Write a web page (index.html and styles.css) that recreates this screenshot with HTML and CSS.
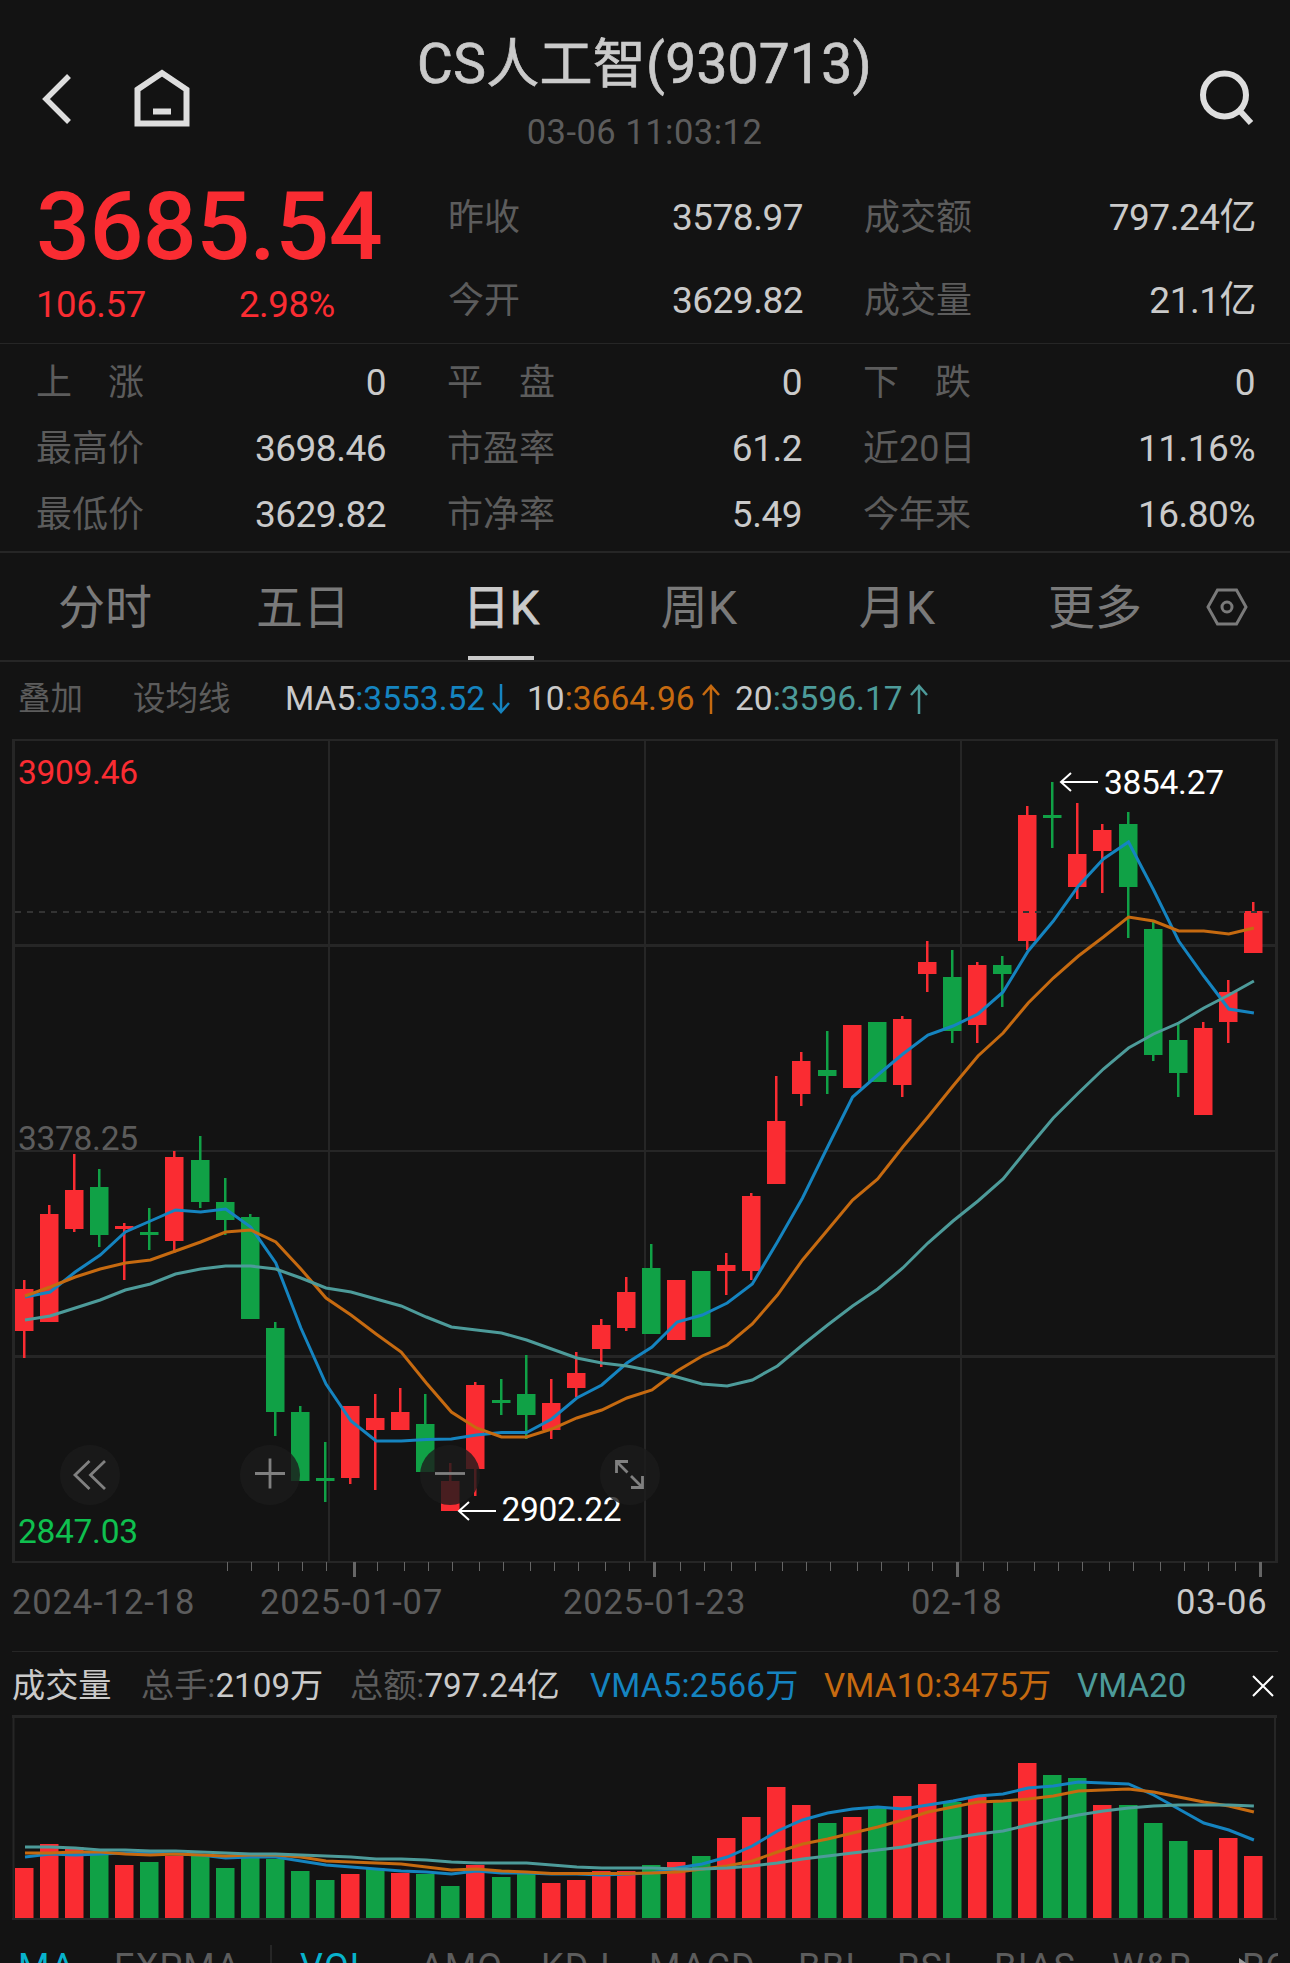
FILE: index.html
```html
<!DOCTYPE html>
<html lang="zh-CN">
<head>
    <meta charset="UTF-8">
    <meta name="viewport" content="width=device-width, initial-scale=1.0">
    <title>CS人工智(930713)</title>
    <link rel="stylesheet" href="styles.css">
</head>
<body>

<header class="top-bar">
    <div class="top-left">
        <svg class="icon-back" viewBox="0 0 30 50"><path d="M27 2 L4 25 L27 48"/></svg>
        <svg class="icon-home" viewBox="0 0 56 60"><path d="M3.5 20.5 L28 4 L52.5 20.5 V54.5 H3.5 Z"/><path d="M19 42.500 H37"/></svg>
    </div>
    <div class="top-title">
        <h1>CS<span class="cjk">人工智</span>(930713)</h1>
        <p>03-06 11:03:12</p>
    </div>
    <svg class="icon-search" viewBox="0 0 56 56"><circle cx="25.500" cy="25" r="21.500"/><path d="M41 41 L52 53"/></svg>
</header>

<section class="quote">
    <div class="price-box">
        <div class="price">3685.54</div>
        <div class="change"><span>106.57</span><span>2.98%</span></div>
    </div>
    <dl class="pairs">
        <div class="pair"><dt>昨收</dt><dd>3578.97</dd></div>
        <div class="pair"><dt>成交额</dt><dd>797.24亿</dd></div>
        <div class="pair"><dt>今开</dt><dd>3629.82</dd></div>
        <div class="pair"><dt>成交量</dt><dd>21.1亿</dd></div>
    </dl>
</section>

<dl class="stats">
    <div class="pair"><dt>上　涨</dt><dd>0</dd></div>
    <div class="pair"><dt>平　盘</dt><dd>0</dd></div>
    <div class="pair"><dt>下　跌</dt><dd>0</dd></div>
    <div class="pair"><dt>最高价</dt><dd>3698.46</dd></div>
    <div class="pair"><dt>市盈率</dt><dd>61.2</dd></div>
    <div class="pair"><dt>近20日</dt><dd>11.16%</dd></div>
    <div class="pair"><dt>最低价</dt><dd>3629.82</dd></div>
    <div class="pair"><dt>市净率</dt><dd>5.49</dd></div>
    <div class="pair"><dt>今年来</dt><dd>16.80%</dd></div>
</dl>

<nav class="tabs">
    <a>分时</a>
    <a>五日</a>
    <a class="active">日K</a>
    <a>周K</a>
    <a>月K</a>
    <a>更多</a>
    <svg class="icon-set" viewBox="0 0 44 40"><path d="M12.500 3 H31.500 L41 20 L31.500 37 H12.500 L3 20 Z"/><circle cx="22" cy="20" r="5"/></svg>
</nav>

<div class="ma-row">
    <span class="ma-add">叠加</span>
    <span class="ma-set">设均线</span>
    <span class="ma-item w1">MA5<b class="blue">:3553.52</b><svg class="arrow blue" viewBox="0 0 18 30"><path d="M9 0 V28 M1 19 L9 28 L17 19"/></svg></span>
    <span class="ma-item w2">10<b class="orange">:3664.96</b><svg class="arrow orange" viewBox="0 0 18 30"><path d="M9 30 V2 M1 11 L9 2 L17 11"/></svg></span>
    <span class="ma-item">20<b class="teal">:3596.17</b><svg class="arrow teal" viewBox="0 0 18 30"><path d="M9 30 V2 M1 11 L9 2 L17 11"/></svg></span>
</div>

<div class="kline">
    <svg id="kline" viewBox="0 735 1290 845" width="1290" height="845"></svg>
    <div class="chart-buttons">
        <button><svg viewBox="0 0 60 60"><path d="M29.500 16 L15 30 L29.500 44 M45 16 L30.500 30 L45 44"/></svg></button>
        <button><svg viewBox="0 0 60 60"><path d="M15 28.500 H45 M30 13.500 V43.500"/></svg></button>
        <button><svg viewBox="0 0 60 60"><path d="M15 28.500 H45"/></svg></button>
        <button><svg viewBox="0 0 60 60"><path d="M28 16.500 H16.500 V28 M16.500 16.500 L27.500 27.500 M31 31 L42.500 42.500 M42.500 31 V42.500 H31"/></svg></button>
    </div>
</div>

<div class="dates">
    <span>2024-12-18</span>
    <span>2025-01-07</span>
    <span>2025-01-23</span>
    <span>02-18</span>
    <span class="today">03-06</span>
</div>

<div class="vol-row">
    <span class="v1 light">成交量</span>
    <span class="v2">总手:<b class="light">2109万</b></span>
    <span class="v3">总额:<b class="light">797.24亿</b></span>
    <span class="v4 blue">VMA5:2566万</span>
    <span class="v5 orange">VMA10:3475万</span>
    <span class="v6 teal">VMA20</span>
    <svg class="icon-close" viewBox="0 0 22 22"><path d="M1 1 L21 21 M21 1 L1 21"/></svg>
</div>

<svg class="volume" id="volume" viewBox="0 1713 1290 210" width="1290" height="210"></svg>

<div class="indicators">
    <div class="main-ind"><span class="on">MA</span><span>EXPMA</span></div>
    <div class="sub-ind">
        <span class="on">VOL</span><span>AMO</span><span>KDJ</span><span>MACD</span><span>BBI</span><span>RSI</span><span>BIAS</span><span>W&amp;R</span><span class="last">ROC</span>
    </div>
    <svg class="more" viewBox="0 0 10 14"><path d="M0 0 L10 7 L0 14 Z"/></svg>
</div>

<script src="chart.js"></script>
</body>
</html>
```
FILE: styles.css
```css
* {
    box-sizing: border-box;
}
body {
    margin: 0;
    width: 1290px;
    height: 1963px;
    overflow: hidden;
    background-color: #131313;
    color: #cacaca;
    font-family: Roboto, "Noto Sans CJK SC", sans-serif;
    font-size: 36px;
}
h1, p, dl, dd, dt {
    margin: 0;
    font-weight: 400;
}
b {
    font-weight: 400;
}
svg {
    display: block;
    fill: none;
}
.light { color: #cacaca; }
.blue { color: #1584c0; }
.orange { color: #c66a10; }
.teal { color: #4d9b9a; }

/* header */
.top-bar {
    display: flex;
    justify-content: space-between;
    height: 175px;
    padding: 0 35px 0 42px;
}
.top-left {
    display: flex;
    width: 242px;
}
.icon-back {
    width: 30px;
    height: 50px;
    margin-top: 74px;
    stroke: #dedede;
    stroke-width: 5.5;
}
.icon-home {
    width: 56px;
    height: 60px;
    margin: 69px 0 0 62px;
    stroke: #dedede;
    stroke-width: 6;
}
.top-title {
    text-align: center;
}
.top-title h1 {
    height: 66px;
    margin-top: 31px;
    font-size: 55px;
    line-height: 66px;
    font-weight: 400;
    letter-spacing: 0.3px;
    -webkit-text-stroke: 0.7px #cacaca;
}
.top-title .cjk {
    font-size: 53px;
}
.top-title p {
    margin-top: 13px;
    line-height: 44px;
    font-size: 34.5px;
    letter-spacing: 0.5px;
    color: #5c5c5c;
}
.icon-search {
    width: 56px;
    height: 56px;
    margin: 70px 0 0 194px;
    stroke: #dedede;
    stroke-width: 6;
}

/* quote block */
.quote {
    display: flex;
    height: 169px;
    border-bottom: 1px solid #262626;
}
.price-box {
    width: 448px;
    padding-left: 36px;
    color: #fa2c32;
}
.price {
    height: 104px;
    line-height: 104px;
    font-size: 95px;
    font-weight: 500;
    letter-spacing: -0.6px;
}
.change {
    display: flex;
    line-height: 51px;
    font-size: 36.5px;
    letter-spacing: -0.4px;
}
.change span:first-child {
    width: 203px;
}
.pairs {
    display: grid;
    grid-template-columns: 355px 392px;
    column-gap: 61px;
    grid-auto-rows: 83.500px;
}
.pair {
    display: flex;
    justify-content: space-between;
    align-items: center;
    line-height: 44px;
}
.pair dt {
    height: 42px;
    color: #5c5c5c;
}
.pair dd {
    height: 42px;
    font-size: 37px;
    letter-spacing: -0.5px;
}
.stats {
    display: grid;
    grid-template-columns: 350px 355px 392px;
    column-gap: 61px;
    grid-auto-rows: 66px;
    height: 209px;
    padding: 5px 0 0 36px;
    border-bottom: 2px solid #262626;
}

/* period tabs */
.tabs {
    display: flex;
    height: 109px;
    padding-left: 6px;
    border-bottom: 2px solid #262626;
    color: #7a7a7a;
    font-size: 47px;
    line-height: 109px;
}
.tabs a {
    display: flex;
    flex-direction: column;
    align-items: center;
    width: 198px;
    height: 107px;
}
.tabs .active {
    color: #cacaca;
    font-weight: 400;
    -webkit-text-stroke: 0.8px #cacaca;
}
.tabs .active::after {
    content: "";
    width: 66px;
    height: 4px;
    margin-top: -6px;
    background-color: #cacaca;
    flex: none;
}
.icon-set {
    width: 44px;
    height: 40px;
    margin: 34px 0 0 11px;
    stroke: #7a7a7a;
    stroke-width: 3;
}

/* moving averages */
.ma-row {
    display: flex;
    height: 73px;
    padding-left: 18px;
    line-height: 75px;
    font-size: 33.500px;
}
.ma-add {
    width: 115px;
    font-size: 32.500px;
    color: #5c5c5c;
}
.ma-set {
    width: 152px;
    font-size: 32.500px;
    color: #5c5c5c;
}
.ma-item {
    display: flex;
    align-items: center;
}
.w1 { width: 242px; }
.w2 { width: 208px; }
.arrow {
    width: 18px;
    height: 30px;
    margin-left: 7px;
    stroke: currentColor;
    stroke-width: 2.5;
}

/* candles */
.kline {
    position: relative;
    height: 845px;
}
.kline text {
    font-size: 33.500px;
    letter-spacing: -0.3px;
}
.chart-buttons {
    position: absolute; /* floats over the candles */
    left: 60px;
    top: 710px;
    display: flex;
    gap: 120px;
}
.chart-buttons button {
    width: 60px;
    height: 60px;
    padding: 0;
    border: none;
    border-radius: 50%;
    background-color: rgba(28, 28, 28, 0.8);
}
.chart-buttons svg {
    stroke: #808080;
    stroke-width: 2.8;
}
.dates {
    display: grid;
    grid-template-columns: 248px 303px 348px 265px 1fr;
    height: 72px;
    margin: 0 12px;
    border-bottom: 1px solid #262626;
    line-height: 45px;
    font-size: 34.500px;
    letter-spacing: 0.9px;
    color: #5c5c5c;
}
.dates .today {
    color: #cacaca;
}

/* volume */
.vol-row {
    display: flex;
    height: 61px;
    padding-left: 12px;
    line-height: 67px;
    font-size: 33.200px;
    color: #5c5c5c;
}
.v1 { width: 129px; }
.v2 { width: 209px; }
.v3 { width: 240px; }
.v4 { width: 234px; }
.v5 { width: 253px; }
.v6 { width: 175px; }
.v4, .v5 {
    letter-spacing: 0.2px;
}
.icon-close {
    width: 22px;
    height: 22px;
    margin-top: 23px;
    stroke: #fff;
    stroke-width: 2;
}

/* indicator picker, cut off by the bottom of the screen */
.indicators {
    display: flex;
    height: 18px;
    margin-top: 22px;
    line-height: 44px;
    font-size: 36px;
    color: #5c5c5c;
    letter-spacing: 1.2px;
    position: relative;
}
.indicators .on {
    color: #08b2cc;
}
.main-ind {
    display: grid;
    grid-template-columns: 96px auto;
    width: 272px;
    flex: none;
    padding-left: 18px;
    border-right: 2px solid #262626;
}
.sub-ind {
    display: grid;
    grid-template-columns: 120px 121px 108px 149px 99px 97px 118px 130px 36px;
    padding-left: 28px;
}
.sub-ind .last {
    overflow: hidden;
}
.more {
    position: absolute; /* scroll hint over the last item */
    left: 1239px;
    top: 13px;
    width: 10px;
    height: 14px;
    fill: #9a9a9a;
}
```
FILE: chart.js
```js
const RED = '#fa2c32';
const GREEN = '#10a146';
const BLUE = '#1584c0';
const ORANGE = '#c66a10';
const TEAL = '#4d9b9a';
const GRID = '#262626';

// color, high, body top, body bottom, low
const candles = [
    ['r', 1280, 1289, 1331, 1358], ['r', 1205, 1214, 1322, 1322], ['r', 1154, 1190, 1229, 1232],
    ['g', 1169, 1187, 1235, 1247], ['r', 1223, 1226, 1229, 1280], ['g', 1208, 1232, 1235, 1250],
    ['r', 1151, 1157, 1241, 1253], ['g', 1136, 1160, 1202, 1208], ['g', 1178, 1202, 1220, 1235],
    ['g', 1214, 1217, 1319, 1319], ['g', 1322, 1328, 1412, 1436], ['g', 1406, 1412, 1481, 1481],
    ['g', 1442, 1478, 1481, 1502], ['r', 1406, 1406, 1478, 1484], ['r', 1394, 1418, 1430, 1490],
    ['r', 1388, 1412, 1430, 1430], ['g', 1394, 1424, 1472, 1472], ['r', 1463, 1481, 1511, 1511],
    ['r', 1382, 1385, 1469, 1496], ['g', 1379, 1400, 1403, 1415], ['g', 1355, 1394, 1415, 1439],
    ['r', 1379, 1403, 1430, 1439], ['r', 1352, 1373, 1388, 1397], ['r', 1319, 1325, 1349, 1367],
    ['r', 1277, 1292, 1328, 1331], ['g', 1244, 1268, 1334, 1334], ['r', 1280, 1280, 1340, 1340],
    ['g', 1271, 1271, 1337, 1337], ['r', 1253, 1265, 1271, 1295], ['r', 1193, 1196, 1271, 1280],
    ['r', 1076, 1121, 1184, 1184], ['r', 1052, 1061, 1094, 1106], ['g', 1031, 1070, 1076, 1094],
    ['r', 1025, 1025, 1088, 1088], ['g', 1022, 1022, 1082, 1082], ['r', 1016, 1019, 1085, 1097],
    ['r', 941, 962, 974, 992], ['g', 950, 977, 1031, 1043], ['r', 962, 965, 1025, 1043],
    ['g', 956, 965, 974, 1007], ['r', 806, 815, 941, 950], ['g', 782, 815, 818, 848],
    ['r', 803, 854, 887, 899], ['r', 824, 830, 851, 893], ['g', 812, 824, 887, 938],
    ['g', 922, 929, 1055, 1061], ['g', 1022, 1040, 1073, 1097], ['r', 1022, 1028, 1115, 1115],
    ['r', 980, 992, 1022, 1043], ['r', 902, 911, 953, 953]
];
const ma5 = [1297, 1292, 1272, 1255, 1232, 1221, 1210, 1212, 1209, 1227, 1263, 1328, 1384, 1421, 1441, 1441, 1439.5, 1439, 1435, 1432.5, 1432.5, 1419, 1398, 1385, 1363, 1347, 1322, 1315, 1303, 1284, 1242, 1198, 1147, 1097, 1075, 1054, 1035, 1026, 1014, 992, 951, 921, 886, 859, 842, 890, 941, 976, 1009, 1013];
const ma10 = [1296, 1287, 1277, 1269, 1263, 1260, 1251, 1242, 1232, 1230, 1242, 1269, 1298, 1315, 1334, 1352, 1383, 1412, 1428, 1437, 1437, 1429, 1418, 1410, 1398, 1390, 1371, 1356, 1345, 1324, 1295, 1260, 1230, 1200, 1179, 1147, 1117, 1086, 1056, 1033, 1003, 978, 956, 937, 917, 921, 931, 931, 934, 928];
const ma20 = [1320, 1316, 1308, 1300, 1290, 1284, 1274, 1269, 1266, 1266, 1269, 1278, 1288, 1292, 1299, 1306, 1317, 1327, 1330, 1333, 1340, 1349, 1358, 1363, 1366, 1371, 1377, 1384, 1386, 1380, 1366, 1345, 1325, 1306, 1289, 1268, 1243, 1221, 1201, 1179, 1148, 1118, 1093, 1069, 1048, 1034, 1023, 1008, 995, 981];

const volColor = 'rrrgrgrggggggrgrggrggrrrrgrgrrrrgrgrrgrgrggrgggrrr';
const volTop = [1868, 1844, 1847, 1855, 1865, 1862, 1856, 1856, 1868, 1857, 1859, 1871, 1880, 1874, 1868, 1873, 1874, 1886, 1865, 1877, 1874, 1883, 1880, 1871, 1871, 1865, 1862, 1856, 1838, 1817, 1787, 1805, 1823, 1817, 1808, 1796, 1784, 1802, 1797, 1802, 1763, 1775, 1778, 1805, 1805, 1823, 1841, 1850, 1838, 1856];
const vma5 = [1857, 1854, 1855, 1854, 1853, 1853, 1854, 1855, 1858, 1857, 1857, 1861, 1865, 1867, 1869, 1871, 1872, 1874, 1871, 1873, 1873, 1874, 1874, 1875, 1874, 1873, 1868, 1864, 1857, 1846, 1831, 1820, 1813, 1809, 1807, 1809, 1805, 1801, 1796, 1794, 1788, 1786, 1782, 1783, 1784, 1795, 1809, 1823, 1830, 1840];
const vma10 = [1853, 1853, 1852, 1852, 1854, 1855, 1854, 1855, 1856, 1855, 1855, 1857, 1861, 1862, 1863, 1864, 1867, 1870, 1869, 1871, 1872, 1873.5, 1873.5, 1873.5, 1873.5, 1873, 1872, 1869, 1866, 1861, 1852, 1844, 1839, 1833, 1827, 1820, 1812, 1807, 1802, 1801, 1799, 1796, 1791, 1790, 1789, 1792, 1797, 1802, 1806, 1812];
const vma20 = [1847, 1847, 1848, 1850, 1850, 1851, 1851, 1852, 1853, 1854, 1854, 1855, 1856, 1857, 1859, 1859, 1860, 1862, 1863, 1863, 1863, 1865, 1867, 1868, 1868, 1868, 1869, 1869, 1868, 1866, 1863, 1859, 1856, 1853, 1850, 1847, 1842, 1838, 1834, 1831, 1825, 1820, 1815, 1811, 1808, 1806, 1805, 1805, 1805, 1806];

const minorTicks = [227, 251, 278, 302, 326, 377, 404, 428, 452, 479, 503, 530, 554, 578, 605, 629, 680, 704, 731, 755, 782, 806, 830, 857, 881, 908, 932, 983, 1007, 1034, 1058, 1082, 1109, 1133, 1160, 1184, 1208, 1235];
const majorTicks = [353, 653, 956, 1259];

const centerX = i => 24.5 + i * 25.08;

function rect(x, y, w, h, fill) {
    return `<rect x="${x}" y="${y}" width="${w}" height="${h}" fill="${fill}"/>`;
}

function line(values, color) {
    const points = values.map((y, i) => `${(centerX(i) + 0.5).toFixed(1)},${y}`).join(' ');
    return `<polyline points="${points}" stroke="${color}" stroke-width="3"/>`;
}

function text(x, y, color, value) {
    return `<text x="${x}" y="${y}" fill="${color}">${value}</text>`;
}

function drawKline() {
    let out = '';
    // frame and grid
    out += rect(12, 739, 1266, 2, GRID) + rect(12, 1561, 1266, 2, GRID);
    out += rect(12, 739, 3, 823, GRID) + rect(1275, 739, 3, 823, GRID);
    [328, 644, 960].forEach(x => out += rect(x, 740, 2, 822, GRID));
    out += rect(15, 944, 1260, 3, GRID) + rect(15, 1150, 1260, 2, GRID) + rect(15, 1355, 1260, 3, GRID);

    // axis ticks
    minorTicks.forEach(x => out += rect(x, 1562, 1, 9, '#666'));
    majorTicks.forEach(x => out += rect(x, 1562, 3, 15, '#666'));

    out += text(18, 1150, '#5c5c5c', '3378.25');

    candles.forEach(([c, high, top, bottom, low], i) => {
        const x = Math.floor(centerX(i));
        const color = c === 'r' ? RED : GREEN;
        out += rect(x - 1, high, 2.5, low - high, color);
        out += rect(x - 9, top, 18.5, bottom - top, color);
    });
    out += `<path d="M15 912 H1269" stroke="#333" stroke-width="2" stroke-dasharray="6 6"/>`;
    out += line(ma5, BLUE) + line(ma10, ORANGE) + line(ma20, TEAL);

    out += text(18, 784, RED, '3909.46');
    out += text(18, 1543, '#0fc04f', '2847.03');
    out += text(1104, 794, '#fff', '3854.27');
    out += text(501.5, 1521, '#fff', '2902.22');
    out += `<path d="M1098 782 H1061 M1071 773 L1061 782 L1071 791" stroke="#fff" stroke-width="2"/>`;
    out += `<path d="M496 1511 H459 M469 1502 L459 1511 L469 1520" stroke="#fff" stroke-width="2"/>`;
    document.getElementById('kline').innerHTML = out;
}

function drawVolume() {
    let out = '';
    out += rect(12, 1715, 1265, 3, GRID) + rect(12, 1918, 1265, 2, GRID);
    out += rect(12.5, 1715, 2, 204, GRID) + rect(1274, 1715, 2, 204, GRID);
    volTop.forEach((y, i) => {
        const x = Math.floor(centerX(i));
        out += rect(x - 9, y, 18.5, 1918 - y, volColor[i] === 'r' ? RED : GREEN);
    });
    out += line(vma5, BLUE) + line(vma10, ORANGE) + line(vma20, TEAL);
    document.getElementById('volume').innerHTML = out;
}

drawKline();
drawVolume();
```
